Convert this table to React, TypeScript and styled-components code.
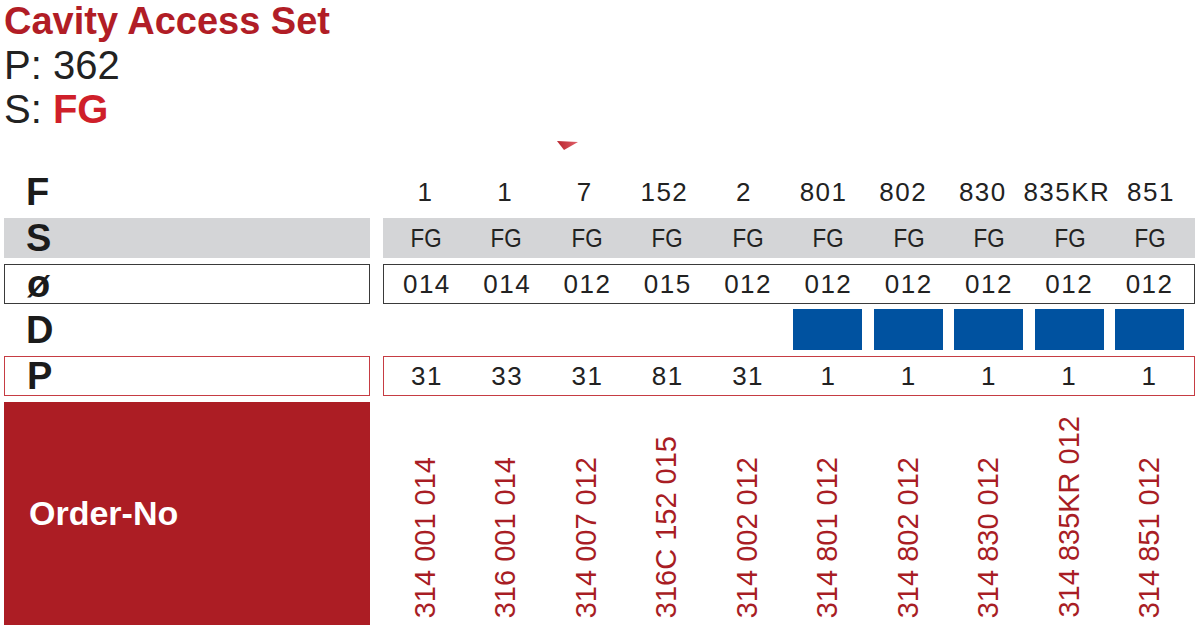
import React from "react";
import styled, {createGlobalStyle, css} from "styled-components";

type Tone = "plain" | "gray" | "dark" | "red";

const columns = [
  {f: "1", s: "FG", d: "014", blue: false, p: "31", order: "314 001 014"},
  {f: "1", s: "FG", d: "014", blue: false, p: "33", order: "316 001 014"},
  {f: "7", s: "FG", d: "012", blue: false, p: "31", order: "314 007 012"},
  {f: "152", s: "FG", d: "015", blue: false, p: "81", order: "316C 152 015"},
  {f: "2", s: "FG", d: "012", blue: false, p: "31", order: "314 002 012"},
  {f: "801", s: "FG", d: "012", blue: true, p: "1", order: "314 801 012"},
  {f: "802", s: "FG", d: "012", blue: true, p: "1", order: "314 802 012"},
  {f: "830", s: "FG", d: "012", blue: true, p: "1", order: "314 830 012"},
  {f: "835KR", s: "FG", d: "012", blue: true, p: "1", order: "314 835KR 012"},
  {f: "851", s: "FG", d: "012", blue: true, p: "1", order: "314 851 012"},
];

const GlobalStyle = createGlobalStyle`
  html, body {
    margin: 0;
    padding: 0;
    background: #fff;
  }
  body {
    font-family: "Liberation Sans", Arial, sans-serif;
    color: #1f1f1f;
  }
`;

const toneStyles = ({$tone}: {$tone: Tone}) => {
  switch ($tone) {
    case "gray":
      return css`
        background: #d4d5d7;
      `;
    case "dark":
      return css`
        border: 1px solid #3a3a3a;
      `;
    case "red":
      return css`
        border: 1px solid #c63c43;
      `;
    default:
      return css``;
  }
};

const Page = styled.div`
  position: relative;
  width: 1200px;
  height: 630px;
  overflow: hidden;
  padding: 0 5px 0 4px;
  box-sizing: border-box;
`;

const Header = styled.header`
  display: flex;
  flex-direction: column;
`;

const Title = styled.h1`
  margin: 0;
  font-size: 38px;
  line-height: 43px;
  font-weight: 700;
  color: #b11d26;
`;

const Meta = styled.div`
  font-size: 40px;
  line-height: 44px;
  color: #222;
`;

const Accent = styled.span`
  color: #cf1f2a;
  font-weight: 700;
`;

const Marker = styled.svg`
  position: absolute;
  left: 556px;
  top: 140px;
`;

const Table = styled.div`
  margin-top: 41px;
  display: grid;
  grid-template-columns: 366px 812px;
  grid-template-rows: repeat(5, 40px) 223px;
  column-gap: 13px;
  row-gap: 6px;
`;

const Label = styled.div<{$tone: Tone}>`
  display: flex;
  align-items: center;
  padding-left: 22px;
  box-sizing: border-box;
  font-size: 38px;
  font-weight: 700;
  color: #1b1b1b;
  ${toneStyles}
`;

const Values = styled.div<{$tone: Tone}>`
  display: grid;
  grid-template-columns: repeat(10, 1fr);
  padding: 0 5px 0 2px;
  box-sizing: border-box;
  ${toneStyles}
`;

const Value = styled.div`
  display: flex;
  align-items: center;
  justify-content: center;
  padding-left: 1.5px;
  font-size: 26px;
  letter-spacing: 1.5px;
  color: #222;
  white-space: nowrap;
`;

const Narrow = styled.span`
  display: inline-block;
  transform: scaleX(0.86);
  letter-spacing: 0;
`;

const BlueBox = styled.div`
  justify-self: center;
  width: 69px;
  height: 41px;
  margin-top: -1px;
  background: #0052a0;
`;

const OrderLabel = styled.div`
  display: flex;
  align-items: center;
  padding-left: 25px;
  background: #ac1d24;
  color: #fff;
  font-size: 34px;
  font-weight: 700;
`;

const OrderList = styled.div`
  display: grid;
  grid-template-columns: repeat(10, 1fr);
  padding: 0 5px 7px 2px;
  box-sizing: border-box;
`;

const OrderNo = styled.div`
  justify-self: center;
  align-self: end;
  writing-mode: vertical-rl;
  transform: rotate(180deg);
  font-size: 29px;
  line-height: 29px;
  color: #a81d24;
  white-space: nowrap;
`;

export default function App() {
  return (
    <Page>
      <GlobalStyle />
      <Header>
        <Title>Cavity Access Set</Title>
        <Meta>P: 362</Meta>
        <Meta>
          S: <Accent>FG</Accent>
        </Meta>
      </Header>

      <Marker width="24" height="12" viewBox="0 0 24 12">
        <defs>
          <linearGradient id="wedge" x1="0" y1="0" x2="1" y2="0">
            <stop offset="0" stopColor="#b8242c" />
            <stop offset="1" stopColor="#e0606a" />
          </linearGradient>
        </defs>
        <polygon points="1,1 22,2 8,10" fill="url(#wedge)" />
      </Marker>

      <Table>
        <Label $tone="plain">F</Label>
        <Values $tone="plain">
          {columns.map((c, i) => (
            <Value key={i}>{c.f}</Value>
          ))}
        </Values>

        <Label $tone="gray">S</Label>
        <Values $tone="gray">
          {columns.map((c, i) => (
            <Value key={i}>
              <Narrow>{c.s}</Narrow>
            </Value>
          ))}
        </Values>

        <Label $tone="dark">ø</Label>
        <Values $tone="dark">
          {columns.map((c, i) => (
            <Value key={i}>{c.d}</Value>
          ))}
        </Values>

        <Label $tone="plain">D</Label>
        <Values $tone="plain">
          {columns.map((c, i) => (c.blue ? <BlueBox key={i} /> : <span key={i} />))}
        </Values>

        <Label $tone="red">P</Label>
        <Values $tone="red">
          {columns.map((c, i) => (
            <Value key={i}>{c.p}</Value>
          ))}
        </Values>

        <OrderLabel>Order-No</OrderLabel>
        <OrderList>
          {columns.map((c, i) => (
            <OrderNo key={i}>{c.order}</OrderNo>
          ))}
        </OrderList>
      </Table>
    </Page>
  );
}
